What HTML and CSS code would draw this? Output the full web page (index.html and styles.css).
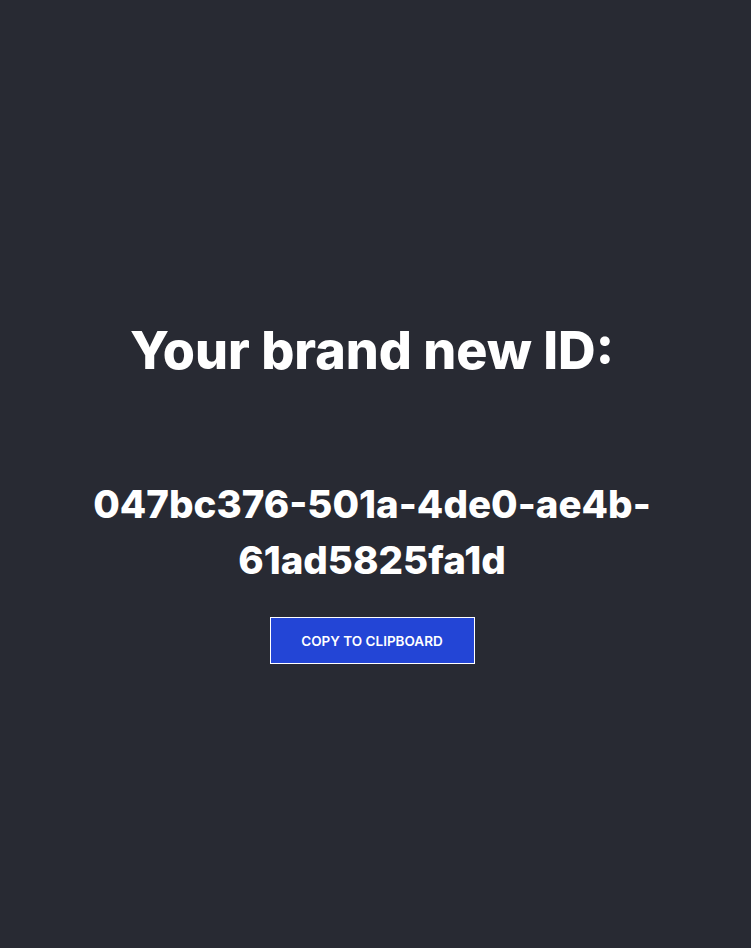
FILE: index.html
```html
<!DOCTYPE html>
<html lang="en">
<head>
    <meta charset="UTF-8">
    <meta name="viewport" content="width=device-width, initial-scale=1.0">
    <title>Your brand new ID</title>
    <link rel="stylesheet" href="styles.css">
</head>
<body>
    <main class="generator">
        <h1 class="title">Your brand new ID:</h1>
        <p class="uuid" id="uuid">047bc376-501a-4de0-ae4b-61ad5825fa1d</p>
        <button class="copy-btn" id="copy">Copy to clipboard</button>
    </main>
</body>
</html>
```

FILE: styles.css
```css
body {
    margin: 0;
    background: #282a33;
    color: #ffffff;
    font-family: 'Inter', 'Noto Sans', sans-serif;
    min-height: 100vh;
}

.generator {
    display: flex;
    flex-direction: column;
    align-items: center;
    text-align: center;
    padding: 319px 7px 0 0;
}

.title {
    margin: 0;
    font-size: 52px;
    font-weight: 800;
    line-height: 64px;
}

.uuid {
    margin: 93px 0 0;
    max-width: 600px;
    font-size: 38.5px;
    font-weight: 800;
    line-height: 56px;
}

.copy-btn {
    margin-top: 29px;
    width: 205px;
    height: 47px;
    background: #2345d6;
    border: 1px solid #ffffff;
    color: #ffffff;
    font-family: 'Inter', sans-serif;
    font-size: 13.5px;
    font-weight: 600;
    text-transform: uppercase;
    cursor: pointer;
}
```
